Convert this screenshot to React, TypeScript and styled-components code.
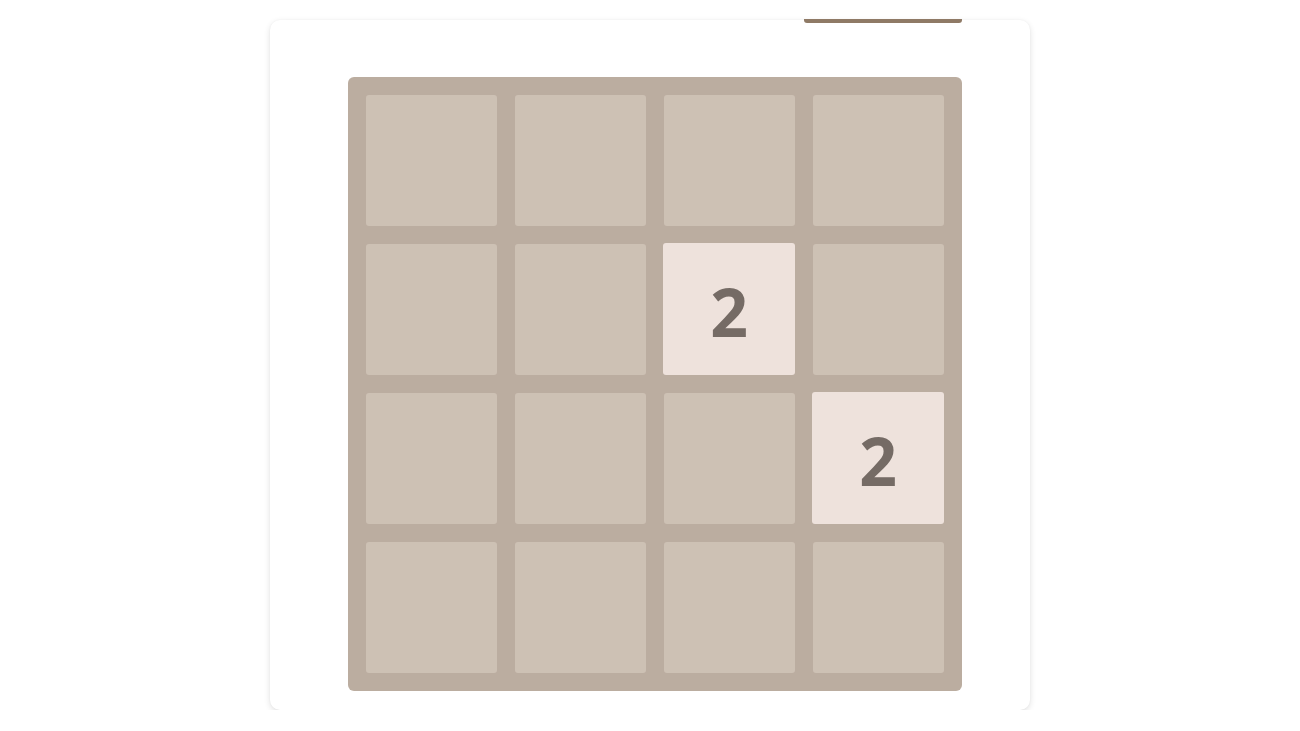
import React from "react";
import styled, { createGlobalStyle } from "styled-components";

const GlobalStyle = createGlobalStyle`
  html, body {
    margin: 0;
    padding: 0;
    background: #ffffff;
    font-family: "Open Sans", "Noto Sans", Arial, sans-serif;
  }
`;

const Page = styled.div`
  display: flex;
  justify-content: center;
  padding-top: 20px;
`;

const Card = styled.div`
  width: 760px;
  box-sizing: border-box;
  padding: 0 68px 19px 78px;
  background: #ffffff;
  border-radius: 10px;
  box-shadow: 0 2px 6px rgba(0, 0, 0, 0.12), 0 0 2px rgba(0, 0, 0, 0.04);
  display: flex;
  flex-direction: column;
`;

const Header = styled.div`
  display: flex;
  justify-content: flex-end;
  height: 57px;
`;

const NewGameBar = styled.div`
  width: 158px;
  height: 4px;
  margin-top: -1px;
  background: #8f7a66;
  border-radius: 0 0 3px 3px;
`;

const Board = styled.div`
  width: 614px;
  height: 614px;
  box-sizing: border-box;
  padding: 18px;
  background: #bbada0;
  border-radius: 6px;
  display: grid;
  grid-template-columns: repeat(4, 131px);
  grid-template-rows: repeat(4, 131px);
  gap: 18px;
`;

const Cell = styled.div<{ $value?: number }>`
  border-radius: 3px;
  background: ${(p) => (p.$value ? "#eee2dc" : "#cdc1b4")};
  color: #756b65;
  display: flex;
  align-items: center;
  justify-content: center;
  font-weight: 700;
  font-size: 66px;
  line-height: 1;
  padding-top: 3px;
  box-sizing: border-box;
  ${(p) => (p.$value ? "margin: -1px 0 0 -1px;" : "")}
`;

const grid = [
  [0, 0, 0, 0],
  [0, 0, 2, 0],
  [0, 0, 0, 2],
  [0, 0, 0, 0],
];

export default function App() {
  return (
    <>
      <GlobalStyle />
      <Page>
        <Card>
          <Header>
            <NewGameBar />
          </Header>
          <Board>
            {grid.flat().map((v, i) => (
              <Cell key={i} $value={v}>
                {v ? v : null}
              </Cell>
            ))}
          </Board>
        </Card>
      </Page>
    </>
  );
}
